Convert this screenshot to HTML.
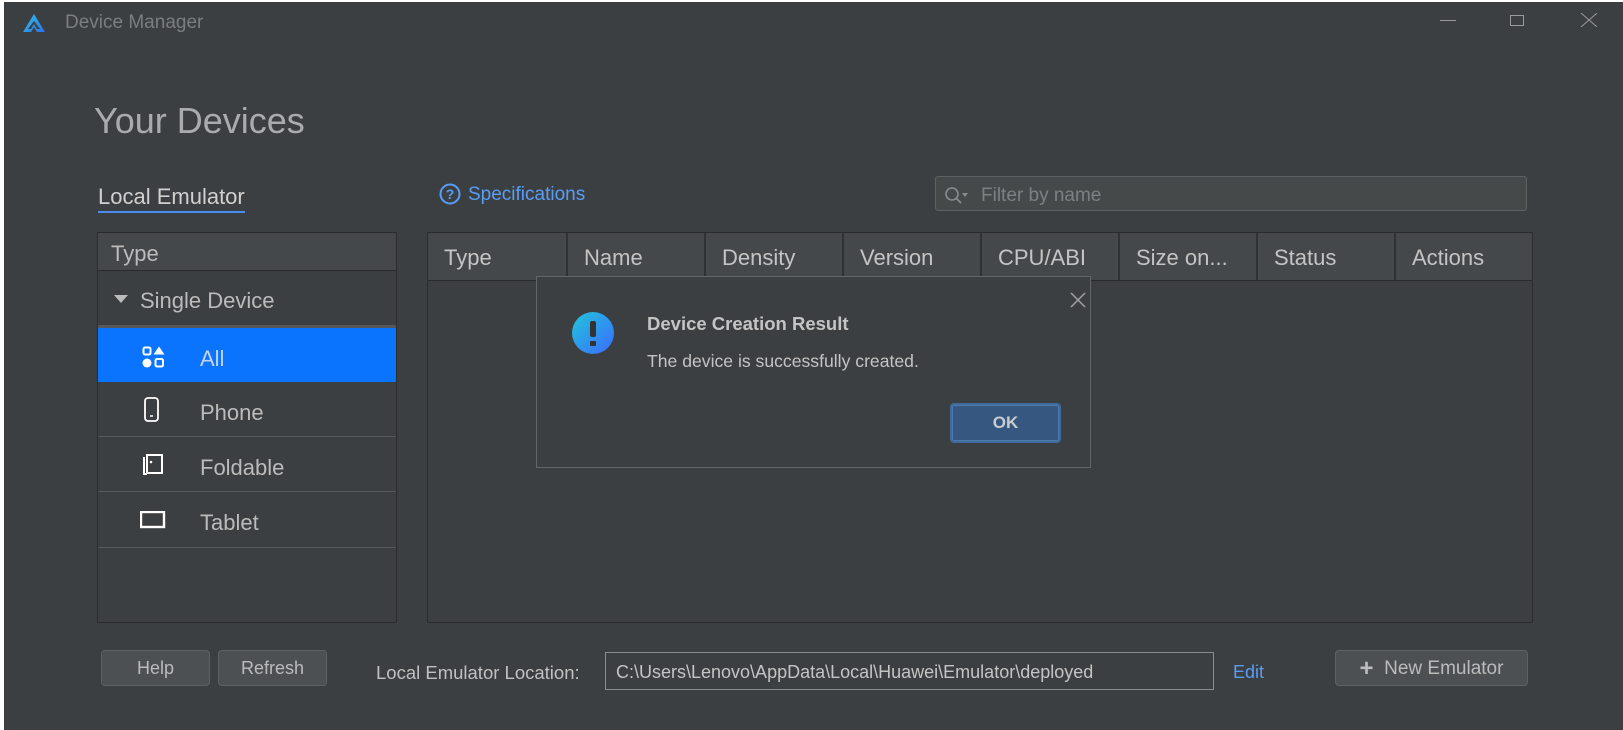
<!DOCTYPE html>
<html><head><meta charset="utf-8"><style>
*{box-sizing:border-box;margin:0;padding:0}
body{width:1623px;height:730px;background:#fff;position:relative;overflow:hidden;font-family:"Liberation Sans",sans-serif;color:#bbbbbb}
.win{position:absolute;left:4px;top:2px;right:0;bottom:0;background:#3c3f41}
.a{position:absolute}
.panel{border:1px solid #2b2b2b;background:#3c3f41}
.row{position:absolute;left:0;right:0;border-bottom:1px solid #555759;font-size:22px}
.th{position:absolute;top:0;height:47px;border-right:2px solid #2f3133;font-size:22px;line-height:50px;padding-left:16px;color:#c4c4c4}
.btn{position:absolute;background:#4c5052;border:1px solid #5e6163;border-radius:4px;font-size:18px;text-align:center;color:#bbbbbb}
</style></head><body>
<div class="win">
</div>
<svg class="a" style="left:22px;top:13px" width="24" height="20" viewBox="0 0 24 20">
<defs><linearGradient id="g" x1="0" y1="0" x2="1" y2="1"><stop offset="0" stop-color="#2ec5e8"/><stop offset="1" stop-color="#2f6fe6"/></linearGradient></defs>
<path d="M12 1 L23 19 L15 19 L12 14 L9 19 L1 19 Z M12 8 L6 16 L9 16 L12 11 L15 16 L18 16 Z" fill="url(#g)" fill-rule="evenodd"/>
</svg>
<div class="a" style="left:65px;top:12px;font-size:19px;color:#7b7e80">Device Manager</div>
<div class="a" style="left:1440px;top:20px;width:16px;height:1px;background:#9a9a9a"></div>
<div class="a" style="left:1510px;top:15px;width:14px;height:11px;border:1px solid #9a9a9a"></div>
<svg class="a" style="left:1580px;top:13px" width="18" height="14"><path d="M1 0 L17 14 M17 0 L1 14" stroke="#9a9a9a" stroke-width="1"/></svg>

<div class="a" style="left:94px;top:100px;font-size:36px;color:#a9abad">Your Devices</div>
<div class="a" style="left:98px;top:184px;font-size:22px;color:#d0d0d0;border-bottom:2px solid #4a8df0;padding-bottom:1px">Local Emulator</div>

<svg class="a" style="left:439px;top:183px" width="22" height="22"><circle cx="11" cy="11" r="9.5" fill="none" stroke="#589df6" stroke-width="2"/><text x="11" y="16" text-anchor="middle" font-size="14" font-weight="bold" fill="#589df6" font-family="Liberation Sans">?</text></svg>
<div class="a" style="left:468px;top:184px;font-size:19px;color:#589df6">Specifications</div>

<div class="a" style="left:935px;top:176px;width:592px;height:35px;border:1px solid #5e6163;border-radius:3px;background:#45494a"></div>
<svg class="a" style="left:944px;top:186px" width="26" height="20"><circle cx="8" cy="8" r="6" fill="none" stroke="#8a8d8f" stroke-width="1.6"/><path d="M12 12 L17 17" stroke="#8a8d8f" stroke-width="1.8"/><path d="M18 7 L24 7 L21 11 Z" fill="#8a8d8f"/></svg>
<div class="a" style="left:981px;top:185px;font-size:19px;color:#7d8082">Filter by name</div>

<div class="a panel" style="left:97px;top:232px;width:300px;height:391px">
 <div class="row" style="top:0;height:38px;background:#45484a;padding-left:13px;line-height:42px;border-bottom:1px solid #2b2b2b">Type</div>
 <div class="row" style="top:38px;height:57px;line-height:60px;padding-left:42px;border-bottom:3px solid #555759">Single Device</div>
 <svg class="a" style="left:16px;top:62px" width="14" height="10"><path d="M0 0 L14 0 L7 8 Z" fill="#bbbbbb"/></svg>
 <div class="row" style="top:95px;height:54px;background:#0a74ff;line-height:62px;padding-left:102px;color:#c8d4e6;border:none">All</div>
 <svg class="a" style="left:44px;top:113px" width="24" height="22"><rect x="1.5" y="1.5" width="7" height="7" rx="1.5" fill="none" stroke="#fff" stroke-width="2"/><path d="M17 0.5 L22.5 8.5 L11.5 8.5 Z" fill="#fff"/><circle cx="5" cy="17" r="4.5" fill="#fff"/><rect x="13.5" y="13" width="7.5" height="7.5" rx="1.5" fill="none" stroke="#fff" stroke-width="2"/></svg>
 <div class="row" style="top:149px;height:55px;line-height:62px;padding-left:102px">Phone</div>
 <svg class="a" style="left:46px;top:164px" width="16" height="26"><rect x="1" y="1" width="13" height="23" rx="3" fill="none" stroke="#fff" stroke-width="1.8"/><path d="M6 19 L9 19" stroke="#fff" stroke-width="1.5"/></svg>
 <div class="row" style="top:204px;height:55px;line-height:62px;padding-left:102px">Foldable</div>
 <svg class="a" style="left:44px;top:219px" width="22" height="24"><path d="M5 3 L20 3 L20 21 L5 21 Z" fill="none" stroke="#fff" stroke-width="2"/><path d="M2 5 L2 22 L5 22" fill="none" stroke="#fff" stroke-width="2"/><circle cx="9" cy="10" r="1.3" fill="#fff"/></svg>
 <div class="row" style="top:259px;height:56px;line-height:62px;padding-left:102px">Tablet</div>
 <svg class="a" style="left:42px;top:278px" width="26" height="18"><rect x="1" y="1" width="23" height="15" fill="none" stroke="#fff" stroke-width="2.4"/></svg>
</div>

<div class="a panel" style="left:427px;top:232px;width:1106px;height:391px">
 <div class="a" style="left:0;top:0;right:0;height:48px;background:#45484a;border-bottom:1px solid #2b2b2b">
  <div class="th" style="left:0;width:140px">Type</div>
  <div class="th" style="left:140px;width:138px">Name</div>
  <div class="th" style="left:278px;width:138px">Density</div>
  <div class="th" style="left:416px;width:138px">Version</div>
  <div class="th" style="left:554px;width:138px">CPU/ABI</div>
  <div class="th" style="left:692px;width:138px">Size on...</div>
  <div class="th" style="left:830px;width:138px">Status</div>
  <div class="th" style="left:968px;width:138px;border:none">Actions</div>
 </div>
</div>

<div class="a" style="left:536px;top:276px;width:555px;height:192px;background:#3c3f41;border:1px solid #646769">
 <svg class="a" style="left:532px;top:14px" width="18" height="18"><path d="M2 2 L16 16 M16 2 L2 16" stroke="#a0a0a0" stroke-width="1.5"/></svg>
 <svg class="a" style="left:34px;top:34px" width="44" height="44"><defs><linearGradient id="g2" x1="0" y1="0" x2="1" y2="1"><stop offset="0" stop-color="#20c6d8"/><stop offset="1" stop-color="#3b6bff"/></linearGradient></defs><circle cx="22" cy="22" r="21" fill="url(#g2)"/><rect x="19" y="10" width="6" height="16" rx="2" fill="#333"/><rect x="19" y="30" width="6" height="5" rx="1" fill="#333"/></svg>
 <div class="a" style="left:110px;top:36px;font-size:18.5px;font-weight:bold;color:#c4c4c4">Device Creation Result</div>
 <div class="a" style="left:110px;top:74px;font-size:17.6px;color:#c4c4c4">The device is successfully created.</div>
 <div class="a" style="left:413px;top:126px;width:111px;height:40px;border:2px solid #3f6a9a;border-radius:4px;background:#365880;box-shadow:inset 0 0 0 1px #4c7bb0;text-align:center;line-height:36px;font-size:17px;font-weight:bold;color:#c8ccd0">OK</div>
</div>

<div class="btn" style="left:101px;top:650px;width:109px;height:36px;line-height:34px">Help</div>
<div class="btn" style="left:218px;top:650px;width:109px;height:36px;line-height:34px">Refresh</div>
<div class="a" style="left:376px;top:662px;font-size:18.5px;color:#c0c0c0">Local Emulator Location:</div>
<div class="a" style="left:605px;top:652px;width:609px;height:38px;border:1px solid #8a8c8e;font-size:18px;line-height:38px;padding-left:10px;color:#c4c4c4">C:\Users\Lenovo\AppData\Local\Huawei\Emulator\deployed</div>
<div class="a" style="left:1233px;top:662px;font-size:18px;color:#589df6">Edit</div>
<div class="btn" style="left:1335px;top:650px;width:193px;height:36px;line-height:36px;font-size:19px"><span style="font-size:24px;font-weight:bold;vertical-align:-2px">+</span>&nbsp; New Emulator</div>
</body></html>
